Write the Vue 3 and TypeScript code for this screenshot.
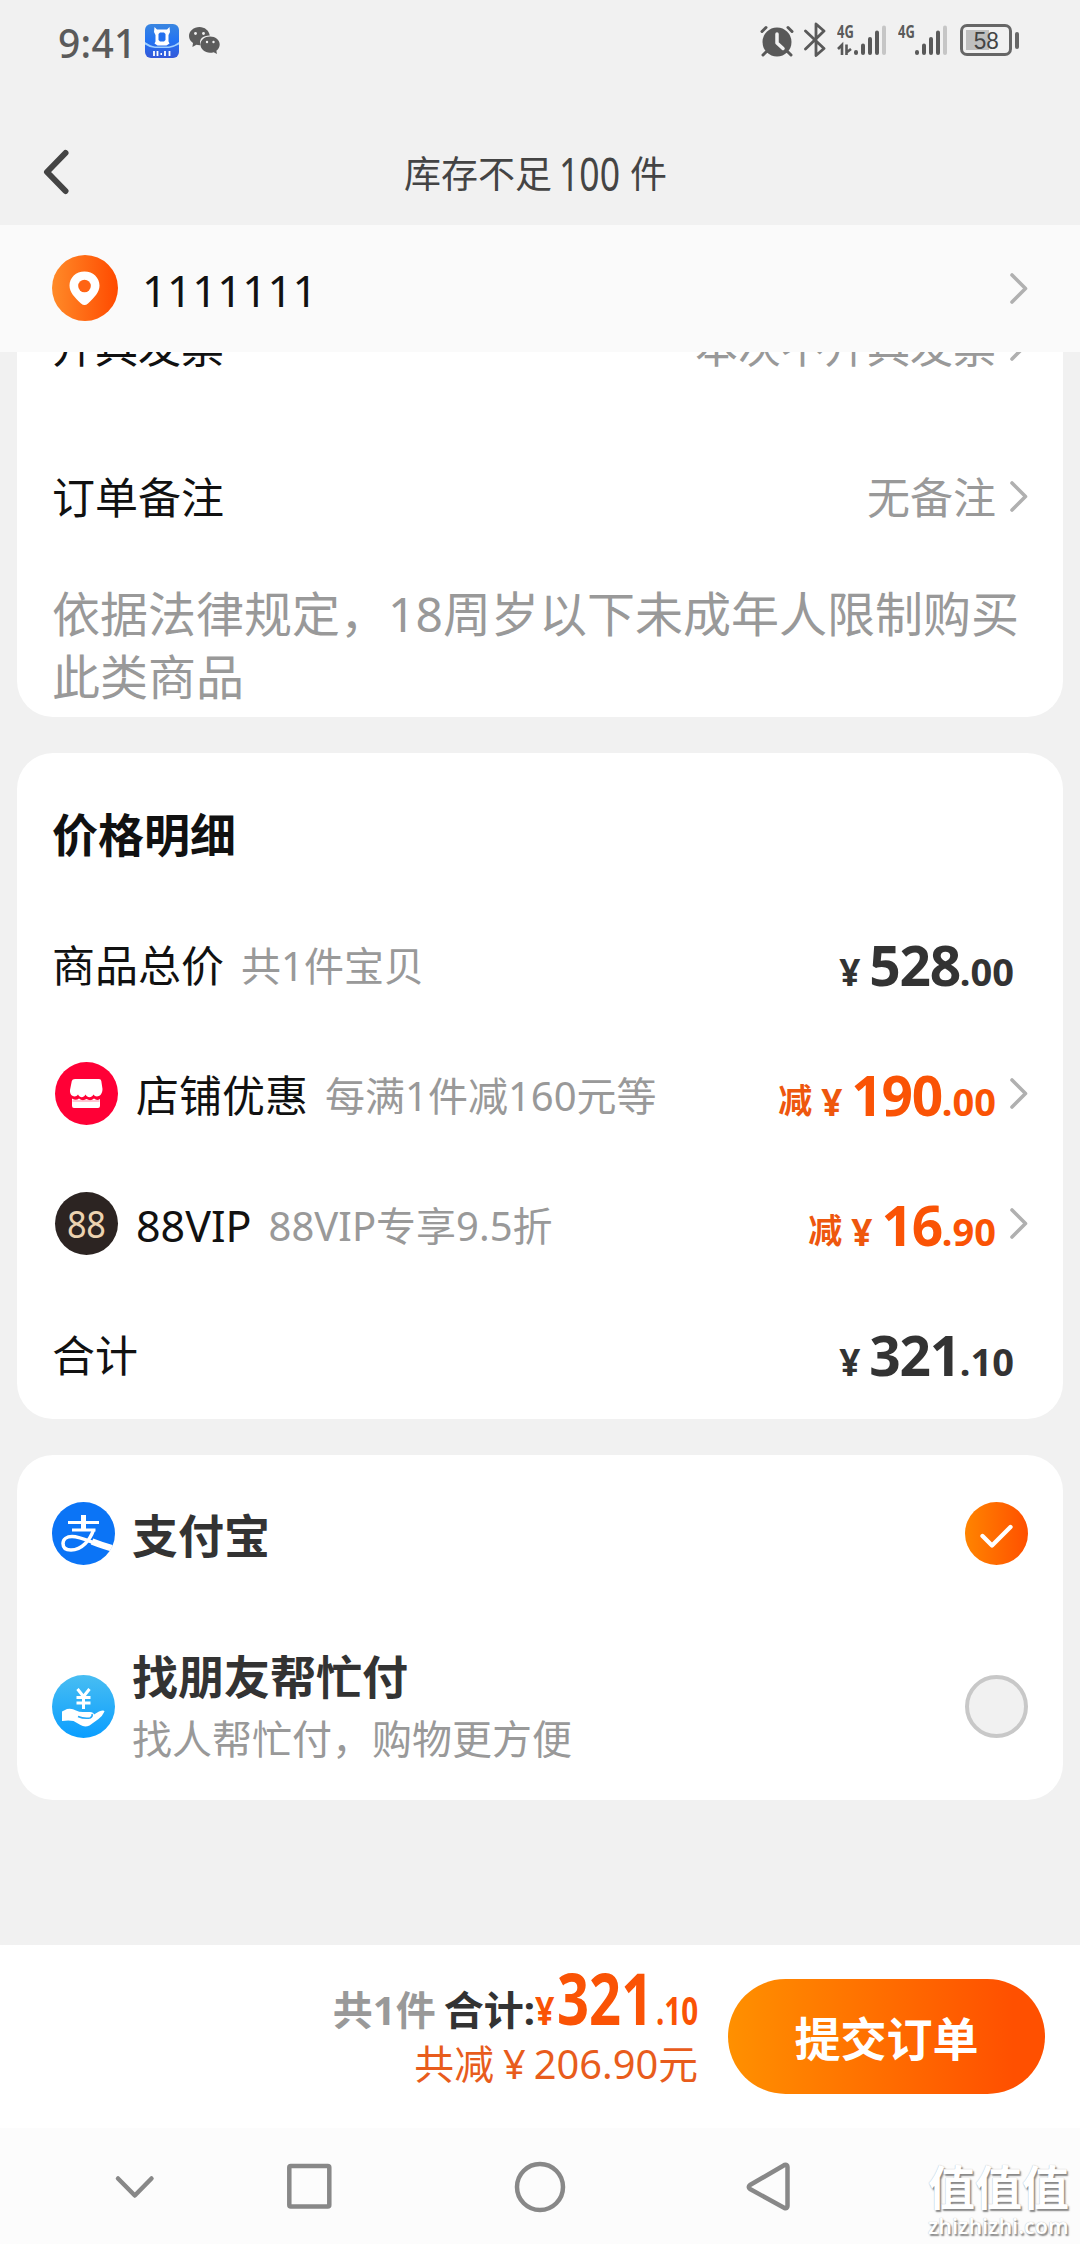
<script setup lang="ts">
interface PriceRow {
  label: string
  note?: string
  icon?: 'shop' | 'vip'
  reduce?: boolean
  whole: string
  cents: string
}

const infoRows = [
  { label: '开具发票', value: '本次不开具发票' },
  { label: '订单备注', value: '无备注' },
]

const priceRows: PriceRow[] = [
  { label: '商品总价', note: '共1件宝贝', whole: '528', cents: '.00' },
  { label: '店铺优惠', note: '每满1件减160元等', icon: 'shop', reduce: true, whole: '190', cents: '.00' },
  { label: '88VIP', note: '88VIP专享9.5折', icon: 'vip', reduce: true, whole: '16', cents: '.90' },
  { label: '合计', whole: '321', cents: '.10' },
]
</script>

<template>
  <div class="screen">
    <header class="status">
      <span class="time">9:41</span>
      <svg class="app-icon" width="34" height="34" viewBox="0 0 34 34">
        <defs>
          <linearGradient id="appBlue" x1="0" y1="0" x2="0" y2="1">
            <stop offset="0" stop-color="#3a86e0" />
            <stop offset=".5" stop-color="#2273f3" />
            <stop offset="1" stop-color="#3558d8" />
          </linearGradient>
        </defs>
        <rect width="34" height="34" rx="6" fill="url(#appBlue)" />
        <path d="M0 18q6 4 10 4.500h14q6-1 10-4.500v2.500q-6 3-10 3.500H10Q4 23.500 0 20.500z" fill="#9fd0ff" />
        <path d="M9.500 3l2.500 2.500h10L24.500 3l.5 5-1.500 3v6.500l1 2-3 2h-9l-3-2 1-2V11L9 8z" fill="#fff" />
        <path d="M15 8.500h4l1.500 1.500v6L19 17.500h-4L13.500 16v-6z" fill="#2470ee" />
        <path d="M9 27v5M12.500 27v5M15.500 30h1.500M20 27v5M24.500 27v5" stroke="#fff" stroke-width="1.800" />
      </svg>
      <svg class="wechat" width="31" height="28" viewBox="0 0 31 28">
        <path d="M10.500 0C4.700 0 0 4 0 9c0 3 1.500 5.300 4 7l-.600 4 4-2.200q1.500.4 3.300.4h1C9 12 14.500 8.300 20.800 8.500 20 3.500 15.700 0 10.500 0z" fill="#5c5c5c" />
        <path d="M21 9.600c5.300 0 9.700 3.500 9.700 8 0 2.600-1.300 4.700-3.300 6.200l.5 3.200-3.200-1.700q-1.700.5-3.700.5c-5.300 0-9.500-3.600-9.500-8.200S15.700 9.600 21 9.600z" fill="#5c5c5c" />
        <circle cx="6.500" cy="6.500" r="1.400" fill="#f1f1f1" /><circle cx="14.500" cy="6.500" r="1.400" fill="#f1f1f1" />
        <circle cx="18" cy="15" r="1.200" fill="#f1f1f1" /><circle cx="24.500" cy="15" r="1.200" fill="#f1f1f1" />
      </svg>
      <span class="spacer"></span>
      <svg class="alarm" width="34" height="34" viewBox="0 0 34 34">
        <circle cx="17" cy="18" r="14.500" fill="#595959" />
        <path d="M2 7.500l4-4M32 7.500l-4-4" stroke="#595959" stroke-width="3" stroke-linecap="round" />
        <path d="M6 28l-3 3M28 28l3 3" stroke="#595959" stroke-width="3" stroke-linecap="round" />
        <path d="M17 10v9l6 5.500" fill="none" stroke="#f1f1f1" stroke-width="3.500" stroke-linecap="round" stroke-linejoin="round" />
      </svg>
      <svg class="bluetooth" width="22" height="36" viewBox="0 0 22 36">
        <path d="M1.500 9L20 26.500l-8 7V2l8 7L1.500 27" fill="none" stroke="#595959" stroke-width="2.800" stroke-linecap="round" stroke-linejoin="round" />
      </svg>
      <div class="signal">
        <span class="net">4G</span>
        <svg width="50" height="32" viewBox="0 0 50 32">
          <path d="M1 25l4-4V31M9.500 20.500V31M9.500 28.500L14 25" fill="none" stroke="#595959" stroke-width="2.600" />
          <path d="M19 28v1M26 21.500V29M33 15V29M40 8.500V29" stroke="#595959" stroke-width="4" stroke-linecap="round" />
          <path d="M47 3.500V29" stroke="#c6c6c6" stroke-width="4" stroke-linecap="round" />
        </svg>
      </div>
      <div class="signal second">
        <span class="net">4G</span>
        <svg width="50" height="32" viewBox="0 0 50 32">
          <path d="M19 28v1M26 21.500V29M33 15V29M40 8.500V29" stroke="#595959" stroke-width="4" stroke-linecap="round" />
          <path d="M47 3.500V29" stroke="#c6c6c6" stroke-width="4" stroke-linecap="round" />
        </svg>
      </div>
      <div class="battery"><div class="cell"><span>58</span></div><i></i></div>
    </header>

    <div class="titlebar">
      <svg width="26" height="46" viewBox="0 0 26 46">
        <path d="M22.500 4L4 23l18.500 19" fill="none" stroke="#444" stroke-width="6" stroke-linecap="round" stroke-linejoin="round" />
      </svg>
      <h1><span>库存不足</span><span class="count"><b>100</b></span><span>件</span></h1>
    </div>

    <div class="address">
      <svg class="pin" width="66" height="66" viewBox="0 0 66 66">
        <defs>
          <linearGradient id="pinFill"><stop offset="0" stop-color="#ff8a28" /><stop offset="1" stop-color="#ff4a00" /></linearGradient>
        </defs>
        <circle cx="33" cy="33" r="33" fill="url(#pinFill)" />
        <path d="M32.500 16.500c8.500 0 15 6.200 15 14 0 7-5 11.500-11.500 18q-3.500 3-7 0c-6.500-6.500-11.500-11-11.500-18 0-7.800 6.500-14 15-14z" fill="#fff" />
        <circle cx="32.500" cy="31" r="6.300" fill="#ff6414" />
      </svg>
      <span class="name">1111111</span>
      <span class="spacer"></span>
      <svg class="chev" width="18" height="31" viewBox="0 0 18 31"><path d="M2 2l13.500 13.500L2 29" /></svg>
    </div>

    <main>
      <section class="card info">
        <div v-for="row in infoRows" :key="row.label" class="info-row">
          <span>{{ row.label }}</span>
          <span class="spacer"></span>
          <span class="value">{{ row.value }}</span>
          <svg class="chev" width="18" height="31" viewBox="0 0 18 31"><path d="M2 2l13.500 13.500L2 29" /></svg>
        </div>
        <p class="notice">依据法律规定，18周岁以下未成年人限制购买<br />此类商品</p>
      </section>

      <section class="card prices">
        <h2>价格明细</h2>
        <div v-for="row in priceRows" :key="row.label" class="price-row">
          <svg v-if="row.icon === 'shop'" class="row-icon" width="63" height="63" viewBox="0 0 63 63">
            <circle cx="31.500" cy="31.500" r="31.500" fill="#ff0036" />
            <path d="M20 17h24q2 0 2.300 2l1.200 8c0 8-7 9-9 5.500-2 3.500-6 3.500-8 0-2 3.500-5.500 3.500-7.500 0-2 3.500-8.500 2.500-8-4.500l1.800-9q.5-2 3.200-2z" fill="#fff" />
            <path d="M17 36.500q4 2.500 7 0 3.500 3 7.500.5 4 2.500 7.500-.5 3 2.500 6 .5V44q0 2-2 2H19q-2 0-2-2z" fill="#fff" />
            <path d="M17.500 39h27" stroke="#ff8da6" stroke-width="1" />
          </svg>
          <span v-if="row.icon === 'vip'" class="row-icon vip"><b>88</b></span>
          <span class="label">{{ row.label }}</span>
          <span v-if="row.note" class="note">{{ row.note }}</span>
          <span class="spacer"></span>
          <div class="price" :class="{ reduce: row.reduce }">
            <span v-if="row.reduce" class="minus">减</span>
            <span class="yen">¥</span>
            <span class="whole">{{ row.whole }}</span>
            <span class="cents">{{ row.cents }}</span>
          </div>
          <svg v-if="row.reduce" class="chev" width="18" height="31" viewBox="0 0 18 31"><path d="M2 2l13.500 13.500L2 29" /></svg>
        </div>
      </section>

      <section class="card pay">
        <div class="pay-row">
          <svg width="63" height="63" viewBox="0 0 63 63">
            <defs><clipPath id="payClip"><circle cx="31.500" cy="31.500" r="31.500" /></clipPath></defs>
            <g clip-path="url(#payClip)">
              <rect width="63" height="63" fill="#0b74f6" />
              <g fill="none" stroke="#fff">
                <path d="M16 20.500h31M20 28h23.500" stroke-width="3" />
                <path d="M31.500 13v15" stroke-width="5" />
                <path d="M41.500 28C38 38 30 48 19 48c-6 0-8-3-8-6.500 0-4.500 4-7 9-7 10 0 23 8 44 13.500" stroke-width="3.500" />
                <path d="M40 39.500q10 4 24 8" stroke-width="6.500" />
              </g>
            </g>
          </svg>
          <span class="pay-name">支付宝</span>
          <span class="spacer"></span>
          <svg width="63" height="63" viewBox="0 0 63 63">
            <defs><linearGradient id="checkFill"><stop offset="0" stop-color="#ff8400" /><stop offset="1" stop-color="#ff5000" /></linearGradient></defs>
            <circle cx="31.500" cy="31.500" r="31.500" fill="url(#checkFill)" />
            <path d="M17.500 34l9.500 9.500L45.500 25" fill="none" stroke="#fff" stroke-width="4.300" stroke-linecap="round" stroke-linejoin="round" />
          </svg>
        </div>
        <div class="pay-row friend">
          <svg width="63" height="63" viewBox="0 0 63 63">
            <defs><linearGradient id="friendFill" x1="0" y1="0" x2="0" y2="1"><stop offset="0" stop-color="#48bdf2" /><stop offset="1" stop-color="#0a9eff" /></linearGradient></defs>
            <circle cx="31.500" cy="31.500" r="31.500" fill="url(#friendFill)" />
            <path d="M25.500 14l6 7.500 6-7.500M24.500 22.500h14M24.500 28h14M31.500 21v13" fill="none" stroke="#fff" stroke-width="3" />
            <path d="M10 36.500l5-2.500q5-1 9 1.500 3 1.500 7 1.500h7q3.500 0 4 2.500l5-3q5-2 5.500 0-2 4.500-6 7.500l-9 6.500q-5 2-9-.5l-7-4q-5-1-11.500 0z" fill="#fff" />
            <path d="M26 41.500q6 2.500 12 1.500 3-1.500 2-4" fill="none" stroke="#26a9fa" stroke-width="1.500" />
          </svg>
          <div class="pay-text"><span class="pay-name">找朋友帮忙付</span><span class="pay-sub">找人帮忙付，购物更方便</span></div>
          <span class="spacer"></span>
          <span class="radio"></span>
        </div>
      </section>
    </main>

    <footer class="submit">
      <div class="sum">
        <div class="sum-top">
          <span class="qty">共1件</span>
          <span class="total">合计:</span>
          <span class="s-yen"><b>¥</b></span>
          <span class="s-whole"><b>321</b></span>
          <span class="s-cents"><b>.10</b></span>
        </div>
        <div class="sum-bottom"><span>共减</span><span class="y">¥</span><span>206.90元</span></div>
      </div>
      <button>提交订单</button>
    </footer>

    <nav>
      <svg width="1080" height="116" viewBox="0 0 1080 116" fill="none" stroke="#888" stroke-width="4.500" stroke-linecap="round" stroke-linejoin="round">
        <path d="M118 50.500L134.800 67.500L151.500 50.500" />
        <rect x="289.300" y="38" width="40" height="40.500" rx="1.500" />
        <circle cx="540" cy="59" r="23" />
        <path d="M784.500 37q3-1 3 2v39q0 3-3 2L750 61q-2.500-2 0-4z" />
      </svg>
      <div class="watermark"><span class="wm-big">值值值</span><span class="wm-small">zhizhizhi.com</span></div>
    </nav>
  </div>
</template>

<style>
body {
  background: #f1f1f1;
}
</style>

<style scoped>
.screen {
  position: relative;
  display: flex;
  flex-direction: column;
  width: 1080px;
  height: 2244px;
  overflow: hidden;
  background: #f1f1f1;
  font-family: "Noto Sans", "Noto Sans CJK SC", sans-serif;
  color: #111;
}
svg { display: block; flex: none; }
.spacer { flex: 1; }
b { font-weight: inherit; display: inline-block; transform-origin: 0 50%; }

.status {
  display: flex;
  align-items: center;
  height: 82px;
  padding: 0 61px 0 58px;
  color: #5a5a5a;
}
.time { width: 87px; font-size: 39px; line-height: 40px; font-weight: 500; letter-spacing: 0.3px; padding-top: 3px; white-space: nowrap; }
.wechat { margin-left: 10px; }
.alarm { margin-right: 10px; }
.bluetooth { margin-right: 11px; margin-top: -2px; }
.signal { position: relative; width: 50px; height: 32px; margin-right: 11px; top: -1px; }
.signal.second { margin-right: 12px; }
.net {
  position: absolute;
  left: 0;
  top: -1px;
  font-size: 18px;
  line-height: 16px;
  font-weight: 700;
  transform: scaleX(0.72);
  transform-origin: 0 0;
}
.battery { display: flex; align-items: center; margin-top: -2px; }
.cell {
  width: 46px;
  height: 26px;
  border: 3px solid #666;
  border-radius: 7px;
  background: linear-gradient(90deg, transparent 3px, #bfbfbf 3px, #bfbfbf 26px, transparent 26px) 0 3px / 100% 20px no-repeat;
  font-family: "Liberation Sans", sans-serif;
  font-size: 24px;
  line-height: 27px;
  text-align: center;
  color: #444;
}
.cell span { display: inline-block; transform: scaleX(0.94); }
.battery i { width: 4px; height: 17px; border-radius: 2px; margin-left: 3px; background: #666; }

.titlebar { position: relative; height: 143px; padding: 0 43px; display: flex; align-items: center; }
.titlebar svg { margin-top: 37px; }
h1 {
  position: absolute;
  left: 404px;
  top: 65px;
  display: flex;
  margin: 0;
  font-size: 37px;
  line-height: 54px;
  font-weight: 400;
  color: #444;
  white-space: nowrap;
}
.count { width: 60px; margin: 0 11px 0 7px; font-size: 45px; }
.count b { transform: scaleX(0.79); }

.address {
  display: flex;
  align-items: center;
  height: 127px;
  padding: 0 52px;
  background: #fafafa;
}
.pin { margin-top: -1px; }
.name { margin-left: 24px; font-size: 43.5px; line-height: 60px; letter-spacing: 0.2px; padding-top: 2px; }
.chev { fill: none; stroke: #b0b0b0; stroke-width: 3.6; stroke-linecap: round; stroke-linejoin: round; }

.card { margin: 0 17px; background: #fff; border-radius: 36px; overflow: hidden; box-sizing: border-box; }
.info { height: 365px; border-radius: 0 0 36px 36px; padding: 0 35px; }
.info-row { display: flex; align-items: center; height: 151px; font-size: 43px; line-height: 60px; }
.info-row:first-child { margin-top: -80.5px; }
.info-row .chev { margin: -4px 0 0 14px; }
.value { color: #999; }
.notice { margin: 8.5px -20px 0 0; font-size: 48px; line-height: 63px; color: #999; white-space: nowrap; }

.prices { height: 666px; margin-top: 36px; padding: 0 35px; }
h2 { margin: 0; height: 148px; font-size: 46px; line-height: 163px; font-weight: 700; }
.price-row { display: flex; align-items: center; height: 130px; font-size: 43px; line-height: 60px; white-space: nowrap; }
.row-icon { margin: -5px 18px 0 3px; }
.vip { width: 63px; height: 63px; border-radius: 50%; background: #2c2422; color: #ecd3b0; }
.vip b { margin-left: 12px; font-size: 39px; line-height: 60px; transform: scaleX(0.88); letter-spacing: -0.5px; }
.note { margin-left: 17px; font-size: 40px; color: #999; }
.label { padding-top: 0; }
.price { display: flex; align-items: baseline; margin-right: 14px; padding-top: 5px; color: #333; font-weight: 700; }
.price.reduce { margin-right: 14px; color: #fa5305; }
.price span { line-height: 60px; }
.minus { position: relative; top: -3px; font-size: 34px; margin-right: 9px; }
.yen { font-size: 37px; margin-right: 9px; }
.whole { font-size: 55px; letter-spacing: -1.3px; }
.cents { font-size: 38px; }
.reduce .yen, .reduce .minus { color: #ee570e; }
.price-row .chev { margin-top: -5px; }

.pay { height: 345px; margin-top: 36px; padding: 47px 35px 0; }
.pay-row { display: flex; align-items: center; height: 63px; }
.pay-name { margin-left: 17px; font-size: 46px; line-height: 60px; font-weight: 700; color: #333; padding-top: 2px; }
.friend { margin-top: 110px; }
.pay-text { display: flex; flex-direction: column; }
.pay-sub { margin-left: 17px; margin-top: 3px; font-size: 40px; line-height: 60px; color: #999; }
.radio { width: 55px; height: 55px; border: 4px solid #c8c8c8; border-radius: 50%; background: #f1f1f1; }

.submit { display: flex; justify-content: flex-end; height: 183px; margin-top: 145px; padding-right: 35px; background: #fff; }
.sum { width: 400px; margin-right: 31px; }
.sum-top { display: flex; align-items: baseline; justify-content: flex-end; height: 86px; padding-top: 13px; box-sizing: border-box; font-weight: 700; font-size: 40px; white-space: nowrap; color: #fa5305; line-height: 80px; }
.qty { color: #999; margin-right: 8px; }
.total { color: #333; }
.s-yen { width: 22px; }
.s-yen b { transform: scaleX(0.85); }
.s-whole { width: 99px; font-size: 71px; }
.s-whole b { transform: scaleX(0.79); }
.s-cents { width: 41px; }
.s-cents b { transform: scaleX(0.74); }
.sum-bottom { display: flex; justify-content: flex-end; margin-top: 3px; font-size: 39.8px; line-height: 60px; color: #e85c1c; position: relative; left: 1px; }
.y { margin: 0 8px 0 9px; }
button {
  width: 317px;
  height: 115px;
  margin-top: 34px;
  padding: 2px 0 0;
  border: 0;
  border-radius: 58px;
  background: linear-gradient(90deg, #ff9000, #ff5000 90%);
  color: #fff;
  font: 700 46px/60px "Noto Sans", "Noto Sans CJK SC", sans-serif;
}

nav { height: 116px; background: #fcfcfc; position: relative; }
.watermark {
  position: absolute;
  left: 928px;
  top: 31px;
  display: flex;
  flex-direction: column;
  color: #fff;
  font-weight: 700;
  text-shadow: 1.5px 1.5px 1.5px #888, 0 0 1px #aaa;
  white-space: nowrap;
}
.wm-big { font-size: 47px; line-height: 56px; }
.wm-small { font-size: 21.4px; line-height: 22px; font-weight: 600; }
</style>
